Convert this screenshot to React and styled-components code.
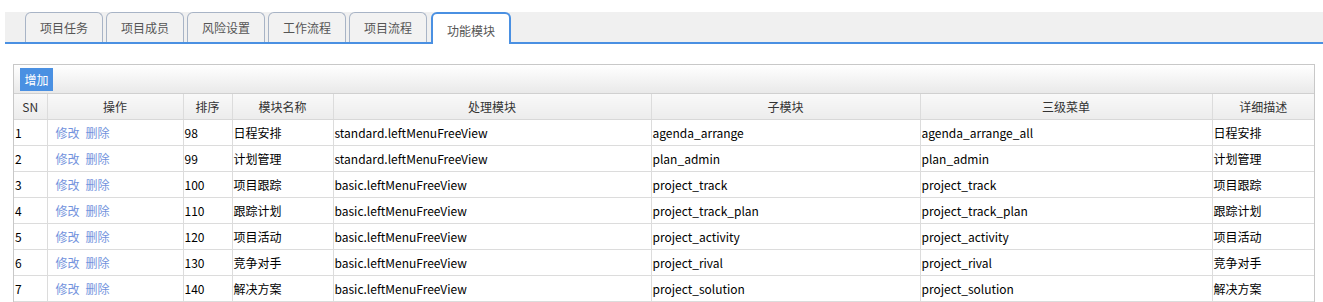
import React from 'react';
import styled, { createGlobalStyle } from 'styled-components';

const GlobalStyle = createGlobalStyle`
  html, body {
    margin: 0;
    padding: 0;
    background: #fff;
    font-family: "Noto Sans CJK SC", "Noto Sans", sans-serif;
    font-size: 12px;
    color: #000;
  }
`;

const Page = styled.div`
  padding-top: 12px;
`;

const TabBar = styled.div`
  display: flex;
  align-items: flex-end;
  gap: 3px;
  height: 30px;
  margin-left: 5px;
  padding-left: 20px;
  background: #f0f0f0;
  border-bottom: 2px solid #4a90e2;
`;

const Tab = styled.div`
  box-sizing: border-box;
  width: ${({ active }) => (active ? '80px' : '78px')};
  height: ${({ active }) => (active ? '32px' : '30px')};
  margin-left: ${({ active }) => (active ? '1px' : '0')};
  margin-bottom: ${({ active }) => (active ? '-2px' : '0')};
  display: flex;
  align-items: center;
  justify-content: center;
  padding-top: ${({ active }) => (active ? '3px' : '0')};
  border: ${({ active }) => (active ? '2px solid #4a90e2' : '1px solid #a8b4c6')};
  border-bottom: none;
  border-radius: 6px 6px 0 0;
  background: ${({ active }) => (active ? '#fff' : '#f2f2f2')};
  color: #555;
  font-size: 12px;
`;

const Panel = styled.div`
  margin: 20px 8px 0 13px;
  border: 1px solid #c8c8c8;
  border-bottom: none;
`;

const Toolbar = styled.div`
  height: 29px;
  padding: 3px 0 0 6px;
  box-sizing: border-box;
  background: linear-gradient(#ffffff, #e9e9e9);
  border-bottom: 1px solid #d0d0d0;
`;

const AddButton = styled.button`
  height: 23px;
  width: 33px;
  padding: 0;
  border: none;
  background: #4a90e2;
  color: #fff;
  font-family: inherit;
  font-size: 12px;
  cursor: pointer;
`;

const Table = styled.table`
  width: 100%;
  border-collapse: collapse;
  table-layout: fixed;
`;

const Th = styled.th`
  height: 25px;
  padding: 0;
  font-weight: normal;
  color: #333;
  text-align: center;
  background: linear-gradient(#f9f9f9, #ececec);
  border-right: 1px solid #dcdcdc;
  border-bottom: 1px solid #d8d8d8;
  &:last-child { border-right: none; }
`;

const Td = styled.td`
  height: 25px;
  padding: 0 0 0 ${({ pad }) => pad || 1}px;
  border-right: 1px solid #dcdcdc;
  border-bottom: 1px solid #dcdcdc;
  white-space: nowrap;
  overflow: hidden;
  &:last-child { border-right: none; }
`;

const Link = styled.a`
  color: #7393dd;
  text-decoration: none;
  margin-right: 6px;
  cursor: pointer;
`;

const tabs = ['项目任务', '项目成员', '风险设置', '工作流程', '项目流程', '功能模块'];

const columns = [
  { title: 'SN', width: 33 },
  { title: '操作', width: 136 },
  { title: '排序', width: 49 },
  { title: '模块名称', width: 101 },
  { title: '处理模块', width: 318 },
  { title: '子模块', width: 269 },
  { title: '三级菜单', width: 292 },
  { title: '详细描述', width: 102 }
];

const rows = [
  [98, '日程安排', 'standard.leftMenuFreeView', 'agenda_arrange', 'agenda_arrange_all'],
  [99, '计划管理', 'standard.leftMenuFreeView', 'plan_admin', 'plan_admin'],
  [100, '项目跟踪', 'basic.leftMenuFreeView', 'project_track', 'project_track'],
  [110, '跟踪计划', 'basic.leftMenuFreeView', 'project_track_plan', 'project_track_plan'],
  [120, '项目活动', 'basic.leftMenuFreeView', 'project_activity', 'project_activity'],
  [130, '竞争对手', 'basic.leftMenuFreeView', 'project_rival', 'project_rival'],
  [140, '解决方案', 'basic.leftMenuFreeView', 'project_solution', 'project_solution']
];

export default function App() {
  return (
    <Page>
      <GlobalStyle />
      <TabBar>
        {tabs.map((t, i) => (
          <Tab key={t} active={i === tabs.length - 1}>{t}</Tab>
        ))}
      </TabBar>
      <Panel>
        <Toolbar>
          <AddButton>增加</AddButton>
        </Toolbar>
        <Table>
          <colgroup>
            {columns.map((c) => (
              <col key={c.title} style={{ width: c.width }} />
            ))}
          </colgroup>
          <thead>
            <tr>
              {columns.map((c) => (
                <Th key={c.title}>{c.title}</Th>
              ))}
            </tr>
          </thead>
          <tbody>
            {rows.map(([sort, name, handler, sub, menu], i) => (
              <tr key={sort}>
                <Td>{i + 1}</Td>
                <Td pad={8}>
                  <Link>修改</Link>
                  <Link>删除</Link>
                </Td>
                <Td>{sort}</Td>
                <Td>{name}</Td>
                <Td>{handler}</Td>
                <Td>{sub}</Td>
                <Td>{menu}</Td>
                <Td>{name}</Td>
              </tr>
            ))}
          </tbody>
        </Table>
      </Panel>
    </Page>
  );
}
